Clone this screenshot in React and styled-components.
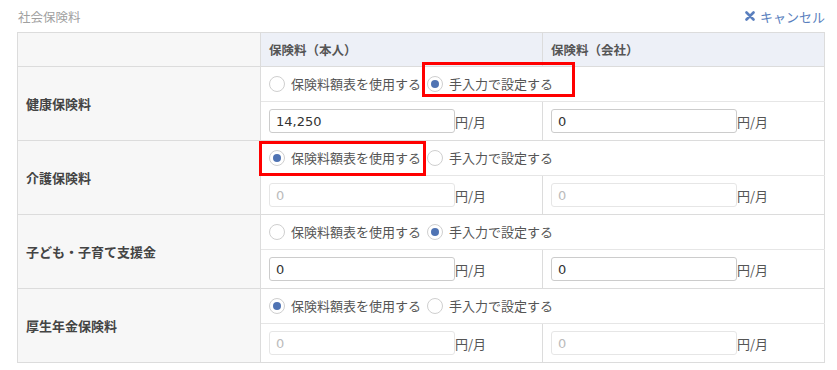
import React from "react"
import styled, { createGlobalStyle } from "styled-components"

const GlobalStyle = createGlobalStyle`
  body {
    margin: 0;
    background: #fff;
    font-family: "Noto Sans CJK JP", "Noto Sans", sans-serif;
  }
`

const rows = [
  { label: "健康保険料", mode: "manual", self: "14,250", company: "0", mark: { opt: "manual", t: -13, b: -4, l: -5, r: -22 } },
  { label: "介護保険料", mode: "table", self: "0", company: "0", mark: { opt: "table", t: -8, b: -9, l: -10, r: -5 } },
  { label: "子ども・子育て支援金", mode: "manual", self: "0", company: "0" },
  { label: "厚生年金保険料", mode: "table", self: "0", company: "0" },
]

const options = [
  { key: "table", text: "保険料額表を使用する" },
  { key: "manual", text: "手入力で設定する" },
]

const CloseIcon = () => (
  <svg width="10" height="10" viewBox="0 0 10 10">
    <path d="M1.5 1.5 L8.5 8.5 M8.5 1.5 L1.5 8.5" stroke="currentColor" strokeWidth="2.6" strokeLinecap="round" />
  </svg>
)

const App = () => (
  <Page>
    <GlobalStyle />
    <TitleBar>
      <Title>社会保険料</Title>
      <CancelLink>
        <CloseIcon />
        キャンセル
      </CancelLink>
    </TitleBar>
    <Table>
      <colgroup>
        <col style={{ width: 243 }} />
        <col style={{ width: 282 }} />
        <col style={{ width: 282 }} />
      </colgroup>
      <thead>
        <tr>
          <HeadCell $blank />
          <HeadCell>保険料（本人）</HeadCell>
          <HeadCell>保険料（会社）</HeadCell>
        </tr>
      </thead>
      <tbody>
        {rows.map((row) => {
          const manual = row.mode === "manual"
          return (
            <React.Fragment key={row.label}>
              <tr>
                <LabelCell rowSpan={2}>{row.label}</LabelCell>
                <RadioCell colSpan={2}>
                  <RadioGroup>
                    {options.map((o) => {
                      const mark = row.mark && row.mark.opt === o.key ? row.mark : null
                      return (
                        <RadioOption key={o.key}>
                          <RadioCircle $checked={row.mode === o.key} />
                          {o.text}
                          {mark && (
                            <Highlight
                              style={{ top: mark.t, bottom: mark.b, left: mark.l, right: mark.r }}
                            />
                          )}
                        </RadioOption>
                      )
                    })}
                  </RadioGroup>
                </RadioCell>
              </tr>
              <InputRow>
                <InputCell>
                  <AmountInput readOnly disabled={!manual} value={row.self} />
                  <Unit>円/月</Unit>
                </InputCell>
                <InputCell>
                  <AmountInput readOnly disabled={!manual} value={row.company} />
                  <Unit>円/月</Unit>
                </InputCell>
              </InputRow>
            </React.Fragment>
          )
        })}
      </tbody>
    </Table>
  </Page>
)

const Page = styled.div`
  padding: 0 12px 0 17px;
`

const TitleBar = styled.div`
  display: flex;
  align-items: center;
  justify-content: space-between;
  height: 32px;
`

const Title = styled.div`
  font-size: 12.5px;
  color: #a0a0a0;
  margin-left: 1px;
`

const CancelLink = styled.a`
  display: flex;
  align-items: center;
  gap: 5px;
  font-size: 13px;
  color: #5a7fbe;
  cursor: pointer;
`

const Table = styled.table`
  width: 100%;
  border-collapse: collapse;
  table-layout: fixed;
  border: 1px solid #dcdcdc;
  font-size: 13px;
`

const HeadCell = styled.th`
  height: 33px;
  padding: 0 8px;
  text-align: left;
  font-size: 12.5px;
  font-weight: bold;
  color: #555;
  background: ${(p) => (p.$blank ? "#f7f7f7" : "#edf0f7")};
  border: 1px solid #dcdcdc;
`

const LabelCell = styled.td`
  padding: 0 8px;
  background: #f7f7f7;
  font-weight: bold;
  color: #444;
  border: 1px solid #dcdcdc;
`

const RadioCell = styled.td`
  height: 34px;
  padding: 0 8px;
  border-bottom: 1px solid #e6e6e6;
`

const RadioGroup = styled.div`
  display: flex;
  align-items: center;
  gap: 6px;
`

const RadioOption = styled.label`
  position: relative;
  display: flex;
  align-items: center;
  gap: 6px;
  color: #555;
  line-height: 18px;
`

const RadioCircle = styled.span`
  position: relative;
  width: 16px;
  height: 16px;
  box-sizing: border-box;
  border: 1px solid #cfcfcf;
  border-radius: 50%;
  background: #fff;
  &::after {
    content: "";
    display: ${(p) => (p.$checked ? "block" : "none")};
    position: absolute;
    left: 3px;
    top: 3px;
    width: 8px;
    height: 8px;
    border-radius: 50%;
    background: #4f73b3;
  }
`

const Highlight = styled.span`
  position: absolute;
  border: 3px solid #f00;
  pointer-events: none;
`

const InputRow = styled.tr`
  border-bottom: 1px solid #dcdcdc;
`

const InputCell = styled.td`
  height: 38px;
  padding: 0 8px;
  border-left: 1px solid #dcdcdc;
  white-space: nowrap;
`

const AmountInput = styled.input`
  box-sizing: border-box;
  width: 186px;
  height: 24px;
  padding: 0 6px;
  vertical-align: middle;
  border: 1px solid ${(p) => (p.disabled ? "#e6e6e6" : "#cccccc")};
  border-radius: 3px;
  background: #fff;
  font: 13px "DejaVu Sans", "Noto Sans CJK JP", sans-serif;
  color: ${(p) => (p.disabled ? "#bbb" : "#333")};
  outline: none;
`

const Unit = styled.span`
  vertical-align: middle;
  color: #555;
`

export default App
